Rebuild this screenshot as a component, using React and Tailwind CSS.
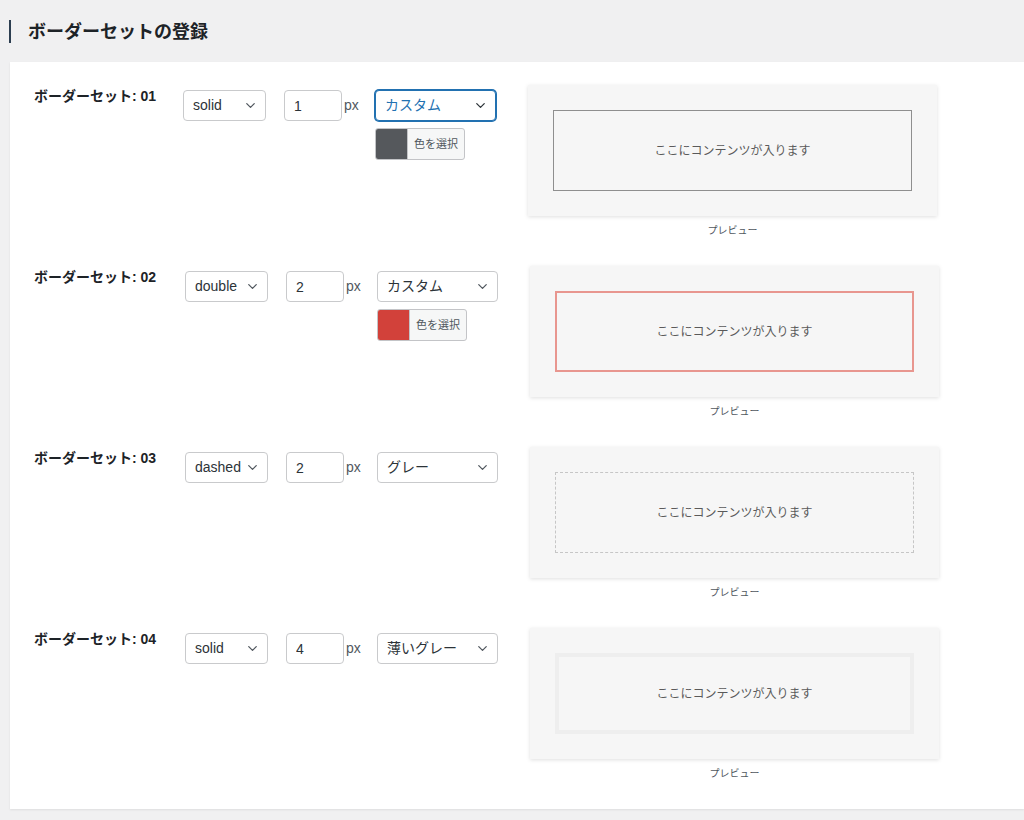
import React from "react";
import { ChevronDown } from "lucide-react";

const sets = [
  { no: "01", style: "solid", width: "1", color: "カスタム", swatch: "#55585c", focused: true, labelW: "w-[149px]", box: "border border-[#8f8f8f]" },
  { no: "02", style: "double", width: "2", color: "カスタム", swatch: "#d2413a", box: "border-2 border-[#e8968f]" },
  { no: "03", style: "dashed", width: "2", color: "グレー", box: "border border-dashed border-[#c6c6c6]" },
  { no: "04", style: "solid", width: "4", color: "薄いグレー", box: "border-4 border-[#eeeeee]" },
];

const Select = ({ value, options, width, focused }) => {
  return (
    <div className={`relative ${width}`}>
      <select
        defaultValue={value}
        className={`appearance-none w-full h-[31px] rounded-[4px] bg-white pl-[9px] pr-6 text-[14px] outline-none ${
          focused
            ? "border border-[#2271b1] shadow-[0_0_0_1px_#2271b1] text-[#2271b1]"
            : "border border-[#c9cacc] text-[#2c3338]"
        }`}
      >
        {options.map((o) => (
          <option key={o}>{o}</option>
        ))}
      </select>
      <ChevronDown
        size={15}
        strokeWidth={2}
        className={`absolute right-[8px] top-[8px] pointer-events-none ${focused ? "text-[#2c3338]" : "text-[#50575e]"}`}
      />
    </div>
  );
};

const Row = ({ set }) => {
  return (
    <div className="flex items-start h-[181px]">
      <div className={`${set.labelW || "w-[151px]"} pt-[1px] text-[14px] leading-[20px] font-bold text-[#1d2327] whitespace-nowrap`}>
        ボーダーセット: {set.no}
      </div>
      <div className="pt-[5px] flex items-start">
        <Select value={set.style} options={["solid", "double", "dashed", "dotted"]} width="w-[83px]" />
        <input
          type="text"
          defaultValue={set.width}
          className="ml-[18px] w-[58px] h-[31px] rounded-[4px] border border-[#c9cacc] bg-white px-[9px] text-[14px] text-[#2c3338] outline-none"
        />
        <span className="w-[33px] pl-[2px] leading-[31px] text-[14px] text-[#50575e]">px</span>
        <div className="flex flex-col gap-[7px]">
          <Select
            value={set.color}
            options={["カスタム", "グレー", "薄いグレー"]}
            width="w-[121px]"
            focused={set.focused}
          />
          {set.swatch && (
            <button className="flex w-[90px] h-[32px] rounded-[3px] border border-[#c3c4c7] overflow-hidden bg-[#f6f7f7]">
              <span className="w-[31px] h-full" style={{ backgroundColor: set.swatch }} />
              <span className="flex-1 border-l border-[#c3c4c7] text-[11px] leading-[30px] text-[#50575e]">色を選択</span>
            </button>
          )}
        </div>
      </div>
      <div className="ml-[32px] flex flex-col items-center">
        <div className="w-[409px] h-[131px] bg-[#f6f6f6] p-[25px] shadow-[0_1px_4px_rgba(0,0,0,0.13)]">
          <div className={`h-full flex items-center justify-center text-[12px] text-[#5a5a5a] ${set.box}`}>
            ここにコンテンツが入ります
          </div>
        </div>
        <div className="mt-[8px] text-[10px] leading-[14px] text-[#50575e]">プレビュー</div>
      </div>
    </div>
  );
};

export default function App() {
  return (
    <div className="min-h-[820px] bg-[#f0f0f1] font-['Liberation_Sans','Noto_Sans_CJK_JP',sans-serif]">
      <div className="h-[62px] pt-[20px] pl-[9px] flex items-start">
        <div className="flex items-center h-[23px] border-l-2 border-[#2c3e50] pl-[17px]">
          <h1 className="text-[18px] font-bold text-[#1d2327] leading-none">ボーダーセットの登録</h1>
        </div>
      </div>
      <div className="ml-[10px] bg-white pt-[23px] pl-[24px] shadow-[0_1px_2px_rgba(0,0,0,0.08)]">
        {sets.map((s) => (
          <Row key={s.no} set={s} />
        ))}
      </div>
    </div>
  );
}
